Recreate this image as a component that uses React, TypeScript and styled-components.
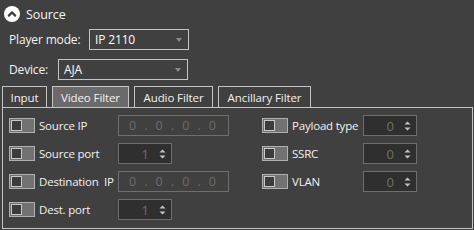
import React from 'react';
import styled, { createGlobalStyle } from 'styled-components';

const GlobalStyle = createGlobalStyle`
  html, body {
    margin: 0;
    padding: 0;
    background: #404040;
  }
  body {
    font-family: 'Open Sans', 'Noto Sans', sans-serif;
    font-size: 11.5px;
    color: #f2f2f2;
  }
`;

const TABS = ['Input', 'Video Filter', 'Audio Filter', 'Ancillary Filter'];
const TAB_WIDTHS = [45, 77, 79, 93];

const LEFT_ROWS = [
  { label: 'Source IP', kind: 'ip' },
  { label: 'Source port', kind: 'spin', value: 1 },
  { label: 'Destination  IP', kind: 'ip' },
  { label: 'Dest. port', kind: 'spin', value: 1 },
];

const RIGHT_ROWS = [
  { label: 'Payload type', kind: 'spin', value: 0 },
  { label: 'SSRC', kind: 'spin', value: 0 },
  { label: 'VLAN', kind: 'spin', value: 0 },
];

const App = () => {
  return (
    <>
      <GlobalStyle />
      <Page>
        <Header>
          <CollapseIcon viewBox="0 0 16 16">
            <circle cx="8" cy="8" r="8" fill="#ffffff" />
            <path
              d="M4.8 9.6 L8 6.4 L11.2 9.6"
              fill="none"
              stroke="#404040"
              strokeWidth="2.2"
              strokeLinecap="round"
              strokeLinejoin="round"
            />
          </CollapseIcon>
          <span>Source</span>
        </Header>

        <FormRow>
          <FieldLabel $width={80}>Player mode:</FieldLabel>
          <Combo $width={100}>
            <span>IP 2110</span>
            <ComboArrow />
          </Combo>
        </FormRow>
        <FormRow>
          <FieldLabel $width={49}>Device:</FieldLabel>
          <Combo $width={130}>
            <span>AJA</span>
            <ComboArrow />
          </Combo>
        </FormRow>

        <TabBar>
          {TABS.map((tab, i) => (
            <Tab key={tab} $width={TAB_WIDTHS[i]} $active={i === 1}>
              {tab}
            </Tab>
          ))}
        </TabBar>

        <Pane>
          <FilterColumn $labelWidth={75}>
            {LEFT_ROWS.map(row => (
              <FilterRow key={row.label} row={row} />
            ))}
          </FilterColumn>
          <FilterColumn $labelWidth={67}>
            {RIGHT_ROWS.map(row => (
              <FilterRow key={row.label} row={row} />
            ))}
          </FilterColumn>
        </Pane>
      </Page>
    </>
  );
};

type Row = { label: string; kind: string; value?: number };

const FilterRow = ({ row }: { row: Row }) => (
  <>
    <Toggle>
      <Knob />
    </Toggle>
    <RowLabel>{row.label}</RowLabel>
    {row.kind === 'ip' ? (
      <IpField>
        <span>0</span>
        <span>.</span>
        <span>0</span>
        <span>.</span>
        <span>0</span>
        <span>.</span>
        <span>0</span>
      </IpField>
    ) : (
      <SpinBox>
        <span>{row.value}</span>
        <Arrows viewBox="0 0 7 10">
          <path d="M0.5 3.5 L3.5 0.5 L6.5 3.5 Z" fill="#c4c4c4" />
          <path d="M0.5 6.5 L3.5 9.5 L6.5 6.5 Z" fill="#c4c4c4" />
        </Arrows>
      </SpinBox>
    )}
  </>
);

export default App;

const Page = styled.div`
  width: 474px;
  height: 230px;
  box-sizing: border-box;
  padding-left: 2px;
  display: flex;
  flex-direction: column;
  overflow: hidden;
`;

const Header = styled.div`
  height: 28px;
  display: flex;
  align-items: center;
  gap: 6px;
  padding-left: 2px;
  font-size: 12.5px;
  letter-spacing: -0.1px;
  color: #f4f4f4;
`;

const CollapseIcon = styled.svg`
  width: 16px;
  height: 16px;
`;

const FormRow = styled.div`
  display: flex;
  align-items: center;
  height: 21px;
  padding-left: 7px;
  margin-top: 1px;
  margin-bottom: 8px;
  font-size: 12px;
  letter-spacing: -0.15px;
`;

const FieldLabel = styled.span<{ $width: number }>`
  width: ${p => p.$width}px;
`;

const Combo = styled.div<{ $width: number }>`
  width: ${p => p.$width}px;
  height: 21px;
  box-sizing: border-box;
  border: 1px solid #c4c4c4;
  display: flex;
  align-items: center;
  justify-content: space-between;
  padding: 0 6px 0 5px;
  color: #ffffff;
`;

const ComboArrow = styled.span`
  width: 0;
  height: 0;
  border-left: 3.5px solid transparent;
  border-right: 3.5px solid transparent;
  border-top: 4px solid #8a8a8a;
`;

const TabBar = styled.div`
  display: flex;
  gap: 5px;
  margin-top: -2px;
`;

const Tab = styled.div<{ $width: number; $active: boolean }>`
  width: ${p => p.$width}px;
  height: 21px;
  box-sizing: border-box;
  border: 1px solid #c4c4c4;
  border-bottom: none;
  background: ${p => (p.$active ? '#6a6a6a' : '#404040')};
  display: flex;
  align-items: center;
  justify-content: center;
  font-size: 11.5px;
  letter-spacing: -0.1px;
  color: #f2f2f2;
`;

const Pane = styled.div`
  width: 471px;
  height: 122px;
  box-sizing: border-box;
  border: 1px solid #c4c4c4;
  padding: 7px 0 0 6px;
  display: flex;
  align-items: flex-start;
  gap: 33px;
`;

const FilterColumn = styled.div<{ $labelWidth: number }>`
  display: grid;
  grid-template-columns: 26px ${p => p.$labelWidth}px auto;
  column-gap: 4px;
  row-gap: 7px;
  align-items: center;
  font-size: 11.5px;
  letter-spacing: -0.2px;
`;

const Toggle = styled.div`
  width: 26px;
  height: 15px;
  box-sizing: border-box;
  border: 1px solid #b0b0b0;
  background: #727272;
  padding: 1px;
  display: flex;
`;

const Knob = styled.div`
  width: 11px;
  height: 11px;
  box-sizing: border-box;
  border: 1px solid #c8c8c8;
  background: #3c3c3c;
`;

const RowLabel = styled.span`
  white-space: pre;
  color: #f2f2f2;
`;

const IpField = styled.div`
  width: 111px;
  height: 21px;
  box-sizing: border-box;
  border: 1px solid #6e6e6e;
  display: flex;
  align-items: center;
  justify-content: space-around;
  padding: 0 8px 0 6px;
  color: #6c6c6c;
  font-size: 12.5px;
  letter-spacing: 0;
`;

const SpinBox = styled.div`
  width: 54px;
  height: 21px;
  box-sizing: border-box;
  border: 1px solid #6e6e6e;
  background: #2f2f2f;
  display: flex;
  align-items: center;
  justify-content: flex-end;
  gap: 10px;
  padding-right: 5px;
  color: #707070;
  font-size: 13px;
  letter-spacing: 0;
`;

const Arrows = styled.svg`
  width: 7px;
  height: 10px;
`;
